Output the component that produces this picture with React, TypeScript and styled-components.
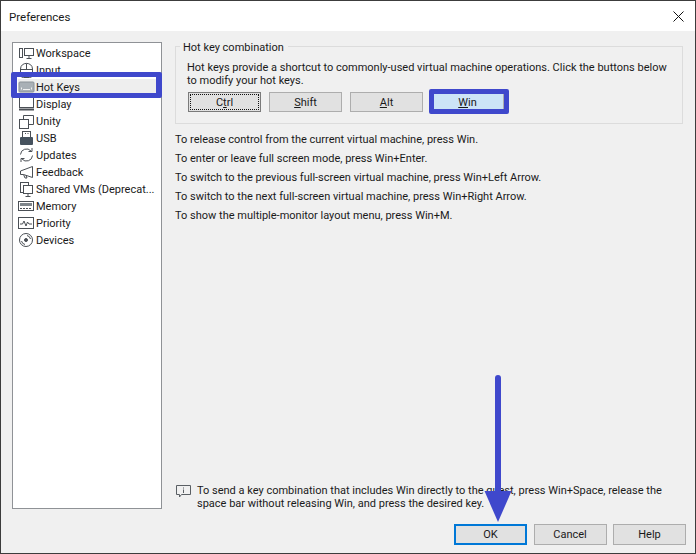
import React, { FC, ReactNode } from "react";
import styled, { createGlobalStyle } from "styled-components";

const GlobalStyle = createGlobalStyle`
  html, body {
    margin: 0;
    padding: 0;
    background: #f0f0f0;
  }
  * {
    box-sizing: border-box;
  }
`;

const stroke = { fill: "none", stroke: "#4a4f55", strokeWidth: 1 };

const icons: Record<string, ReactNode> = {
  Workspace: (
    <g {...stroke}>
      <rect x="1.5" y="3.5" width="3" height="9" />
      <rect x="6.5" y="3.5" width="9" height="7" />
      <path d="M11 10.500v2.500M8.500 13.500h5" />
    </g>
  ),
  Input: (
    <g {...stroke}>
      <path d="M2.500 7c0-7.500 12-7.500 12 0v5.500c0 2-1 3-3 3h-6c-2 0-3-1-3-3z" />
      <path d="M2.500 7.500h12M8.500 1.500v6" />
    </g>
  ),
  "Hot Keys": (
    <g>
      <rect x="1" y="3" width="15" height="10" rx="1" fill="#a9b0b6" stroke="#8b9298" />
      <path d="M3.500 10.500v-2M5 10.500h7M13.500 10.500v-2" fill="none" stroke="#f0f0f0" />
    </g>
  ),
  Display: (
    <g {...stroke}>
      <rect x="1.500" y="1.500" width="14" height="10" />
      <path d="M1 13.500h15" strokeWidth="2" />
    </g>
  ),
  Unity: (
    <g {...stroke}>
      <rect x="1.500" y="6.500" width="9" height="9" />
      <path d="M5.500 6.500v-4h10v9h-5" />
    </g>
  ),
  USB: (
    <g>
      <rect x="4.500" y="1.500" width="8" height="6" fill="none" stroke="#4a4f55" />
      <path d="M7 3.500h1M9.500 3.500h1" stroke="#4a4f55" />
      <rect x="2" y="7" width="13" height="8" rx="1" fill="#46525e" />
    </g>
  ),
  Updates: (
    <g {...stroke}>
      <path d="M2.500 7.500a6 6 0 0 1 10.500-3.500" />
      <path d="M14 1v3.500h-3.500" />
      <path d="M14.500 8.500a6 6 0 0 1-10.500 3.500" />
      <path d="M3 15v-3.500h3.500" />
    </g>
  ),
  Feedback: (
    <g {...stroke}>
      <path d="M14.500 2.500v11l-9-3h-3v-3.500l12-4.500" />
      <path d="M5.500 10.500l1.500 3.500h2l-1-2.500" />
    </g>
  ),
  "Shared VMs (Deprecat...": (
    <g {...stroke}>
      <rect x="2.500" y="1.500" width="8" height="10" />
      <rect x="5.500" y="4.500" width="9" height="8" fill="#fff" />
      <path d="M10 12.500v3M7.500 15.500h5" />
    </g>
  ),
  Memory: (
    <g>
      <rect x="0.500" y="3.500" width="15" height="9" fill="none" stroke="#4a4f55" />
      <rect x="2" y="5" width="12" height="3" fill="#7e858b" />
      <path d="M2 10.500h12" stroke="#4a4f55" strokeDasharray="2 1" />
    </g>
  ),
  Priority: (
    <g {...stroke}>
      <rect x="0.500" y="2.500" width="15" height="11" />
      <path d="M2 9h2.500l1.500-3 2 5 1.500-4 1.500 2h3" />
    </g>
  ),
  Devices: (
    <g {...stroke}>
      <circle cx="8" cy="8" r="6.500" />
      <circle cx="8" cy="8" r="1.500" fill="#4a4f55" />
      <path d="M3.500 9a4.500 4.500 0 0 0 3.500 3.500M12.500 7a4.500 4.500 0 0 0-3.500-3.500" />
    </g>
  ),
};

const sections = Object.keys(icons);

const hints = [
  "To release control from the current virtual machine, press Win.",
  "To enter or leave full screen mode, press Win+Enter.",
  "To switch to the previous full-screen virtual machine, press Win+Left Arrow.",
  "To switch to the next full-screen virtual machine, press Win+Right Arrow.",
  "To show the multiple-monitor layout menu, press Win+M.",
];

const App: FC = () => {
  return (
    <>
      <GlobalStyle />
      <Dialog>
        <TitleBar>
          <Title>Preferences</Title>
          <CloseIcon viewBox="0 0 11 11">
            <path d="M0.500 0.500l10 10M10.500 0.500l-10 10" />
          </CloseIcon>
        </TitleBar>
        <Body>
          <Main>
            <SectionList>
              {sections.map((name) => (
                <SectionRow key={name} $selected={name === "Hot Keys"}>
                  <RowIcon viewBox="0 0 17 17">{icons[name]}</RowIcon>
                  {name}
                </SectionRow>
              ))}
            </SectionList>
            <Pane>
              <GroupBox>
                <GroupLegend>Hot key combination</GroupLegend>
                <GroupText>
                  Hot keys provide a shortcut to commonly-used virtual machine
                  operations. Click the buttons below
                  <br />
                  to modify your hot keys.
                </GroupText>
                <KeyRow>
                  <KeyButton $focused>
                    <FocusRing>
                      C<u>t</u>rl
                    </FocusRing>
                  </KeyButton>
                  <KeyButton>
                    <u>S</u>hift
                  </KeyButton>
                  <KeyButton>
                    <u>A</u>lt
                  </KeyButton>
                  <KeyButton $active>
                    <u>W</u>in
                  </KeyButton>
                </KeyRow>
              </GroupBox>
              <HintList>
                {hints.map((hint) => (
                  <Hint key={hint}>{hint}</Hint>
                ))}
              </HintList>
              <Notice>
                <NoticeIcon viewBox="0 0 15 15">
                  <path d="M0.500 1.500h14v9h-9l-2 2.500v-2.500h-3z" />
                  <path d="M7.500 3.500v1M7.500 5.500v3.500" />
                </NoticeIcon>
                <NoticeText>
                  To send a key combination that includes Win directly to the
                  guest, press Win+Space, release the
                  <br />
                  space bar without releasing Win, and press the desired key.
                </NoticeText>
              </Notice>
            </Pane>
          </Main>
          <Footer>
            <FooterButton $primary>OK</FooterButton>
            <FooterButton>Cancel</FooterButton>
            <FooterButton>Help</FooterButton>
          </Footer>
        </Body>
        <RowMark />
        <KeyMark />
        <Arrow viewBox="0 0 30 150">
          <path d="M15 6v116" stroke="#3f48cc" strokeWidth="6" strokeLinecap="round" fill="none" />
          <path d="M1.500 119h27l-13.500 31z" fill="#3f48cc" />
        </Arrow>
      </Dialog>
    </>
  );
};

export default App;

const Dialog = styled.div`
  position: relative;
  width: 696px;
  height: 554px;
  display: flex;
  flex-direction: column;
  border: 1px solid #3c3c3c;
  background: #f0f0f0;
  color: #1a1a1a;
  font-family: Roboto, "Open Sans", sans-serif;
  font-size: 11px;
  overflow: hidden;
`;

const TitleBar = styled.div`
  height: 30px;
  flex: none;
  display: flex;
  align-items: center;
  justify-content: space-between;
  padding: 0 11px 0 8px;
  background: #fff;
`;

const Title = styled.div`
  font-size: 11.5px;
  padding-top: 1px;
`;

const CloseIcon = styled.svg`
  width: 11px;
  height: 11px;
  fill: none;
  stroke: #111;
`;

const Body = styled.div`
  flex: 1;
  display: flex;
  flex-direction: column;
  padding: 11px 9px 8px 11px;
`;

const Main = styled.div`
  flex: 1;
  display: flex;
  gap: 13px;
  min-height: 0;
`;

const SectionList = styled.div`
  width: 150px;
  height: 467px;
  flex: none;
  padding: 2px 5px;
  background: #fff;
  border: 1px solid #8f9296;
`;

const SectionRow = styled.div<{ $selected?: boolean }>`
  height: 17px;
  display: flex;
  align-items: center;
  gap: 1px;
  white-space: nowrap;
  background: ${(p) => (p.$selected ? "#eeeeee" : "transparent")};
`;

const RowIcon = styled.svg`
  width: 17px;
  height: 17px;
  flex: none;
`;

const Pane = styled.div`
  flex: 1;
  min-width: 0;
  display: flex;
  flex-direction: column;
  height: 467px;
  padding-top: 4px;
`;

const GroupBox = styled.div`
  position: relative;
  height: 78px;
  margin-right: 3px;
  padding: 14px 11px 0;
  border: 1px solid #dcdcdc;
`;

const GroupLegend = styled.div`
  position: absolute;
  top: -6px;
  left: 4px;
  padding: 0 4px 0 3px;
  background: #f0f0f0;
  line-height: 13px;
`;

const GroupText = styled.div`
  line-height: 13px;
  white-space: nowrap;
`;

const KeyRow = styled.div`
  display: flex;
  gap: 8px;
  margin-top: 5px;
  margin-left: 1px;
`;

const KeyButton = styled.div<{ $focused?: boolean; $active?: boolean }>`
  width: 73px;
  height: 20px;
  display: flex;
  align-items: center;
  justify-content: center;
  padding: 1px;
  background: ${(p) => (p.$active ? "#cce4f7" : "#e1e1e1")};
  border: 1px solid ${(p) => (p.$focused ? "#7a7a7a" : "#adadad")};
`;

const FocusRing = styled.span`
  width: 100%;
  height: 100%;
  display: flex;
  align-items: center;
  justify-content: center;
  border: 1px dotted #111;
`;

const HintList = styled.div`
  display: flex;
  flex-direction: column;
  margin-top: 6px;
`;

const Hint = styled.div`
  height: 19px;
  line-height: 19px;
  white-space: nowrap;
`;

const Notice = styled.div`
  display: flex;
  gap: 6px;
  margin-top: auto;
  margin-bottom: -1px;
  margin-left: 1px;
`;

const NoticeIcon = styled.svg`
  width: 15px;
  height: 15px;
  flex: none;
  fill: none;
  stroke: #5a5f64;
`;

const NoticeText = styled.div`
  line-height: 13px;
  white-space: nowrap;
`;

const Footer = styled.div`
  height: 21px;
  flex: none;
  display: flex;
  justify-content: flex-end;
  gap: 6.5px;
  margin-top: 15px;
`;

const FooterButton = styled.div<{ $primary?: boolean }>`
  width: 73px;
  height: 21px;
  display: flex;
  align-items: center;
  justify-content: center;
  background: #e1e1e1;
  border: ${(p) => (p.$primary ? "2px solid #0078d7" : "1px solid #adadad")};
`;

const RowMark = styled.div`
  position: absolute;
  left: 10px;
  top: 71px;
  width: 151px;
  height: 26px;
  border-style: solid;
  border-color: #3f48cc;
  border-width: 5px 6px;
  border-radius: 2px;
`;

const KeyMark = styled.div`
  position: absolute;
  left: 428px;
  top: 88px;
  width: 80px;
  height: 25px;
  border: 5px solid #3f48cc;
  border-radius: 2px;
`;

const Arrow = styled.svg`
  position: absolute;
  left: 482px;
  top: 371px;
  width: 30px;
  height: 150px;
  overflow: visible;
`;
